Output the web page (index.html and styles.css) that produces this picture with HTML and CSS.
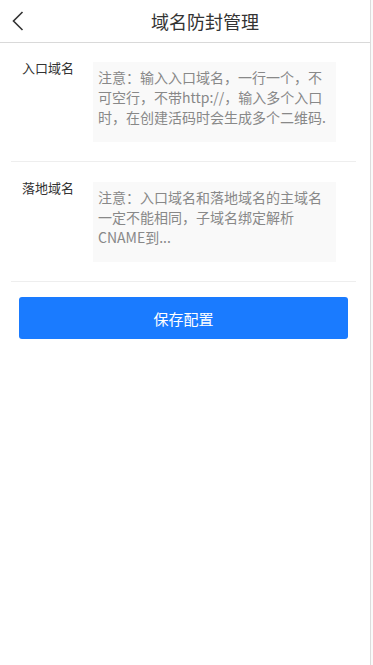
FILE: index.html
```html
<!DOCTYPE html>
<html lang="zh-CN">

<head>
    <meta charset="UTF-8">
    <meta name="viewport" content="width=device-width, initial-scale=1.0">
    <title>域名防封管理</title>
    <link rel="stylesheet" href="styles.css">
</head>

<body>

    <div class="page">
        <!-- Header -->
        <div class="header">
            <a class="back" href="#">
                <svg width="12" height="20" viewBox="0 0 12 20">
                    <polyline points="10.5,1 1.5,10 10.5,19" fill="none" stroke="#333" stroke-width="1.6" />
                </svg>
            </a>
            <h1 class="title">域名防封管理</h1>
        </div>

        <!-- Form -->
        <div class="form">
            <div class="form-row">
                <label for="entry-domain">入口域名</label>
                <textarea id="entry-domain" placeholder="注意：输入入口域名，一行一个，不可空行，不带http://，输入多个入口时，在创建活码时会生成多个二维码."></textarea>
            </div>
            <div class="form-row">
                <label for="land-domain">落地域名</label>
                <textarea id="land-domain" placeholder="注意：入口域名和落地域名的主域名一定不能相同，子域名绑定解析CNAME到..."></textarea>
            </div>
        </div>

        <button class="btn">保存配置</button>
    </div>

</body>

</html>
```

FILE: styles.css
```css
body {
    margin: 0;
    background-color: #fafafa;
    font-family: "Noto Sans CJK SC", "Noto Sans", sans-serif;
    color: #333;
}

.page {
    width: 370px;
    min-height: 665px;
    background-color: #fff;
    border-right: 1px solid #dcdcdc;
}

.header {
    display: flex;
    align-items: center;
    height: 42px;
    border-bottom: 1px solid #d9d9d9;
}

.back {
    display: flex;
    align-items: center;
    justify-content: flex-start;
    width: 40px;
    height: 42px;
    padding-left: 12px;
    box-sizing: border-box;
}

.title {
    flex: 1;
    margin: 0;
    text-align: center;
    font-size: 18px;
    font-weight: normal;
    color: #333;
}

.form {
    margin: 0 14px 0 11px;
}

.form-row {
    display: flex;
    padding: 19px 20px 19px 11px;
    border-bottom: 1px solid #eee;
}

.form-row + .form-row {
    padding-top: 20px;
}

.form-row label {
    width: 71px;
    flex-shrink: 0;
    font-size: 13px;
    line-height: 16px;
    margin-top: -2px;
}

.form-row textarea {
    flex: 1;
    height: 80px;
    box-sizing: border-box;
    padding: 5px 5px;
    border: none;
    outline: none;
    resize: none;
    background-color: #f9f9f9;
    font-family: inherit;
    font-size: 14px;
    line-height: 20px;
    color: #333;
}

.form-row textarea::placeholder {
    color: #888;
}

.btn {
    display: block;
    width: 329px;
    height: 42px;
    margin: 15px 0 0 19px;
    border: none;
    border-radius: 3px;
    background-color: #1a7bff;
    color: #fff;
    font-family: inherit;
    font-size: 15px;
    cursor: pointer;
}
```
